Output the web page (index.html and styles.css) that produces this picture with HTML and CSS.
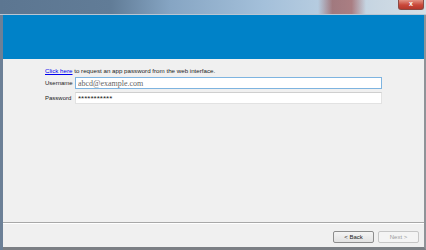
FILE: index.html
```html
<!DOCTYPE html>
<html>
<head>
<title>App Password</title>
<link rel="stylesheet" href="styles.css">
</head>
<body>
<div class="window">
  <div class="titlebar">
    <div class="tower"></div>
    <div class="close">x</div>
  </div>
  <div class="frame">
    <div class="header"></div>
    <div class="content">
      <p class="intro"><a href="#">Click here</a> to request an app password from the web interface.</p>
      <div class="row">
        <label for="username">Username</label>
        <input type="text" id="username" class="field focused" value="abcd@example.com">
      </div>
      <div class="row">
        <label for="password">Password</label>
        <input type="text" id="password" class="field secret" value="***********">
      </div>
    </div>
    <div class="footer">
      <button class="btn">&lt; Back</button>
      <button class="btn" disabled>Next &gt;</button>
    </div>
  </div>
</div>
</body>
</html>
```

FILE: styles.css
```css
html, body {
  margin: 0;
  padding: 0;
}

body {
  width: 426px;
  height: 250px;
  overflow: hidden;
  font-family: "Liberation Sans", Arial, sans-serif;
  background: #6c8097;
}

.window {
  display: flex;
  flex-direction: column;
  height: 250px;
}

.titlebar {
  position: relative;
  height: 14px;
  border-bottom: 1px solid #b9c6d3;
  background: linear-gradient(90deg, #5c7691 0%, #617c97 26%, #86a5c3 40%, #a4c0da 62%, #b6cce0 75%, #c8d6e2 88%, #d6dfe6 100%);
}

.tower {
  position: absolute;
  left: 318px;
  top: 0;
  width: 48px;
  height: 14px;
  background: linear-gradient(90deg, rgba(160, 110, 110, 0) 0%, rgba(150, 85, 85, 0.7) 30%, rgba(160, 90, 90, 0.7) 70%, rgba(160, 110, 110, 0) 100%);
}

.close {
  position: absolute;
  right: 2px;
  top: 0;
  width: 24px;
  height: 9px;
  border: 1px solid #8a4a44;
  border-top: none;
  border-radius: 0 0 3px 3px;
  background: linear-gradient(#e39384, #c9483a 55%, #b5382c);
  color: #fff;
  font: bold 7px/8px "Liberation Sans", Arial, sans-serif;
  text-align: center;
}

.frame {
  flex: 1;
  display: flex;
  flex-direction: column;
  margin-left: 3px;
  border-right: 2px solid #8f9398;
  border-bottom: 3px solid #7b7f84;
  background: #f0f0f0;
}

.header {
  height: 44px;
  background: #0082c8;
}

.content {
  flex: 1;
  padding: 8px 0 0 42px;
  font-size: 6.2px;
  color: #222;
}

.intro {
  margin: 0 0 3px;
  line-height: 7px;
}

.intro a {
  color: #0000ee;
}

.row {
  display: flex;
  align-items: center;
  margin-bottom: 3px;
}

.row label {
  width: 30px;
  font-size: 6px;
}

.field {
  box-sizing: border-box;
  width: 307px;
  height: 12px;
  margin: 0;
  padding: 0 2px;
  border: 1px solid #e2e2e2;
  border-top-color: #cfcfcf;
  background: #fff;
  outline: none;
  color: #666;
  font: 8px "Liberation Serif", "Times New Roman", serif;
}

.focused {
  border-color: #7eb4e0;
}

.secret {
  color: #222;
  font: 8px "Liberation Sans", Arial, sans-serif;
}

.footer {
  height: 24px;
  display: flex;
  justify-content: flex-end;
  align-items: center;
  gap: 4px;
  padding-right: 5px;
  border-top: 1px solid #a8a8a8;
  box-shadow: inset 0 1px 0 #fff;
}

.btn {
  box-sizing: border-box;
  width: 41px;
  height: 12px;
  margin-top: 3px;
  padding: 0;
  border: 1px solid #8d8d8d;
  border-radius: 2px;
  background: linear-gradient(#f4f4f4, #e2e2e2);
  color: #222;
  font: 6px "Liberation Sans", Arial, sans-serif;
}

.btn:disabled {
  border-color: #c6c6c6;
  background: #f4f4f4;
  color: #9a9a9a;
}
```
